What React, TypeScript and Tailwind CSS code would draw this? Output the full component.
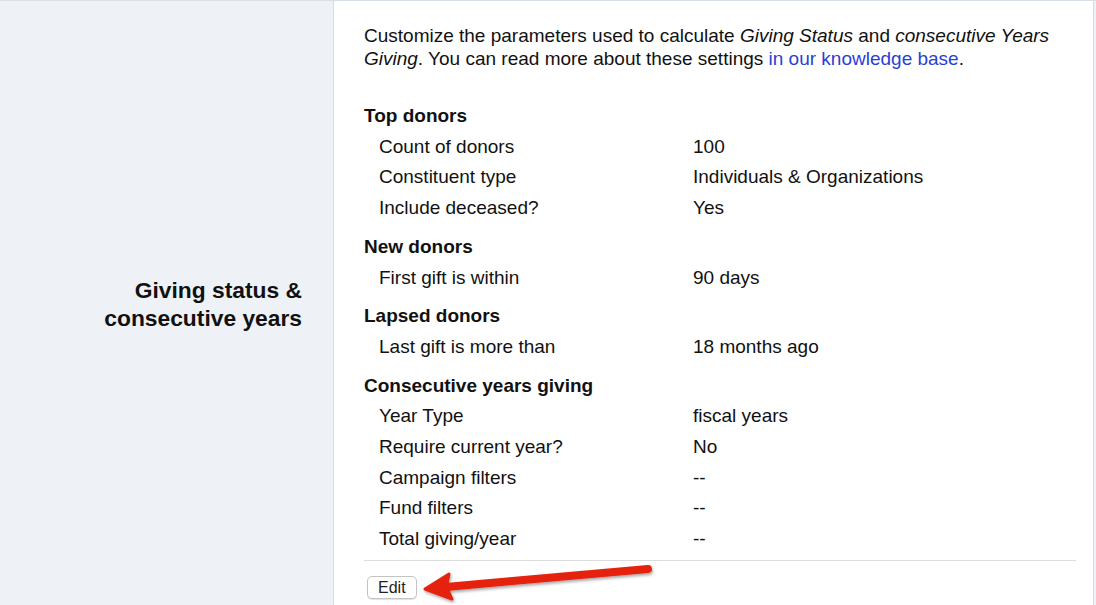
const sections = [
  {
    title: "Top donors",
    rows: [
      ["Count of donors", "100"],
      ["Constituent type", "Individuals & Organizations"],
      ["Include deceased?", "Yes"],
    ],
  },
  { title: "New donors", rows: [["First gift is within", "90 days"]] },
  { title: "Lapsed donors", rows: [["Last gift is more than", "18 months ago"]] },
  {
    title: "Consecutive years giving",
    rows: [
      ["Year Type", "fiscal years"],
      ["Require current year?", "No"],
      ["Campaign filters", "--"],
      ["Fund filters", "--"],
      ["Total giving/year", "--"],
    ],
  },
];

function Arrow() {
  return (
    <svg
      className="pointer-events-none absolute left-[418px] top-[557px]"
      width="250"
      height="46"
      viewBox="0 0 250 46"
    >
      <defs>
        <filter id="sh" x="-10%" y="-40%" width="120%" height="180%">
          <feDropShadow dx="1" dy="2" stdDeviation="1.5" floodColor="#000" floodOpacity="0.35" />
        </filter>
      </defs>
      <g filter="url(#sh)">
        <line x1="230" y1="11" x2="28" y2="29" stroke="#e4220d" strokeWidth="8" strokeLinecap="round" />
        <path d="M7 31 L31 16 Q27 29 34 41 Z" fill="#e4220d" stroke="#e4220d" strokeWidth="3" strokeLinejoin="round" />
      </g>
    </svg>
  );
}

export default function App() {
  return (
    <div
      className="relative flex h-[605px] w-full border-t border-[#d9dfe6] bg-[#eef2f6] text-[#111]"
      style={{ fontFamily: '"Liberation Sans", Arial, sans-serif' }}
    >
      <div className="flex w-[334px] shrink-0 items-center justify-end border-r border-[#d6dce3] pr-[31px]">
        <h2 className="pt-[2px] text-right text-[22.8px] font-bold leading-[28px]">
          Giving status &amp;
          <br />
          consecutive years
        </h2>
      </div>

      <div className="w-[760px] shrink-0 border-r border-[#d6dce3] bg-white pl-[30px] pr-[17px] pt-[23px]">
        <p className="pr-[10px] text-[19px] leading-[23px]">
          Customize the parameters used to calculate <i>Giving Status</i> and <i>consecutive Years Giving</i>. You
          can read more about these settings <span className="text-[#2b3fd4]">in our knowledge base</span>.
        </p>

        <div className="mt-[31px] text-[19px]">
          {sections.map((s, i) => (
            <div key={s.title} className={i === 0 ? "" : "mt-[8px]"}>
              <div className="font-bold leading-[30.7px]">{s.title}</div>
              {s.rows.map(([k, v]) => (
                <div key={k} className="flex pl-[15px] leading-[30.7px]">
                  <span className="w-[314px] shrink-0">{k}</span>
                  <span>{v}</span>
                </div>
              ))}
            </div>
          ))}
        </div>

        <div className="mt-[5px] border-t border-[#dcdcdc] pt-[15px] pl-[3px]">
          <button className="h-[23px] rounded-[5px] border border-[#c4c4c4] bg-white px-[10px] text-[16px] leading-[20px] text-[#222] shadow-[0_1px_1px_rgba(0,0,0,0.12)]">
            Edit
          </button>
        </div>
      </div>

      <Arrow />
    </div>
  );
}
